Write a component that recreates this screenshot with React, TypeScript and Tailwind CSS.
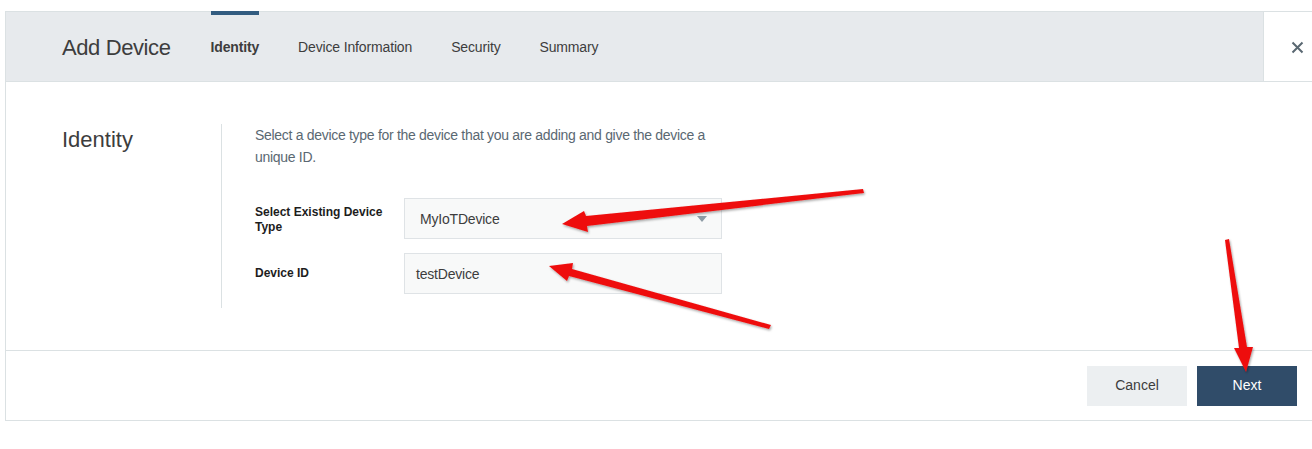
import React from "react";

export default function App() {
  return (
    <div className="relative w-[1312px] h-[449px] bg-white pt-[11px] pl-[5px] font-['Liberation_Sans',Arial,sans-serif] text-[#3d3d3d] overflow-hidden">
      <div className="border border-r-0 border-[#dbe1e3]">
        {/* Header */}
        <div className="flex h-[70px] bg-[#e7eaed] border-b border-[#dbe1e3]">
          <div className="flex flex-1 items-center pl-[56px]">
            <div className="text-[22px] font-light text-[#3d3d3d] tracking-[-0.4px] mr-[40px] pt-[1px]">Add Device</div>
            <div className="flex h-full items-center gap-[39px] text-[14px] tracking-[-0.15px] text-[#3d3d3d] pt-[1px]">
              <div className="relative h-full flex items-center font-bold">
                <div className="absolute top-[-2px] left-0 right-0 h-[4px] bg-[#325c80]"></div>
                Identity
              </div>
              <div className="h-full flex items-center">Device Information</div>
              <div className="h-full flex items-center">Security</div>
              <div className="h-full flex items-center">Summary</div>
            </div>
          </div>
          <div className="w-[49px] bg-white border-l border-[#dbe1e3] flex items-center pl-[27px] pt-[1px]">
            <svg width="13" height="13" viewBox="0 0 13 13">
              <path d="M1.5 1.5 L11.5 11.5 M11.5 1.5 L1.5 11.5" stroke="#5a6872" strokeWidth="2" />
            </svg>
          </div>
        </div>

        {/* Body */}
        <div className="flex h-[268px] pt-[42px]">
          <div className="w-[215px] pl-[56px] pt-[2px]">
            <div className="text-[22px] font-light leading-[28px] text-[#3d3d3d]">Identity</div>
          </div>
          <div className="h-[184px] border-l border-[#dbe1e3] pl-[33px]">
            <p className="w-[470px] text-[14px] leading-[22px] tracking-[-0.3px] text-[#5a6872]">
              Select a device type for the device that you are adding and give the device a unique ID.
            </p>
            <div className="mt-[30px] flex flex-col gap-[14px]">
              <div className="flex items-center">
                <div className="w-[149px] text-[12px] font-bold leading-[15px] text-[#1d1d1d] pt-[2px]">
                  Select Existing Device<br />Type
                </div>
                <div className="w-[318px] h-[41px] bg-[#f8f9f9] border border-[#dfe3e6] flex items-center justify-between pl-[15px] pr-[14px] text-[14px] tracking-[-0.2px] text-[#3d3d3d]">
                  <span className="pt-[1px]">MyIoTDevice</span>
                  <svg width="10" height="6" viewBox="0 0 10 6">
                    <path d="M0 0 L10 0 L5 6 Z" fill="#8c9ba5" />
                  </svg>
                </div>
              </div>
              <div className="flex items-center">
                <div className="w-[149px] text-[12px] font-bold leading-[15px] text-[#1d1d1d]">Device ID</div>
                <div className="w-[318px] h-[41px] bg-[#f8f9f9] border border-[#dfe3e6] flex items-center pl-[11px] text-[14px] tracking-[-0.2px] text-[#3d3d3d]">
                  <span className="pt-[1px]">testDevice</span>
                </div>
              </div>
            </div>
          </div>
        </div>

        {/* Footer */}
        <div className="h-[70px] border-t border-[#dbe1e3] flex items-center justify-end gap-[10px] pr-[15px]">
          <button className="w-[100px] h-[40px] bg-[#eceff1] text-[14px] text-[#3d3d3d]">Cancel</button>
          <button className="w-[100px] h-[40px] bg-[#304c69] text-[14px] text-white">Next</button>
        </div>
      </div>

      {/* Red annotation arrows */}
      <svg className="absolute left-0 top-0 pointer-events-none" width="1312" height="449">
        <defs>
          <filter id="sh" x="-20%" y="-20%" width="140%" height="140%">
            <feDropShadow dx="1" dy="1.5" stdDeviation="1.2" floodColor="#000" floodOpacity="0.35" />
          </filter>
        </defs>
        <g fill="#ee1111" filter="url(#sh)">
          <polygon points="863,189 586,216 584,211 562,224 588,232 587,226 864,193" />
          <polygon points="771,325 572,269 573,263 549,266 567,281 569,276 769,329" />
          <polygon points="1225,240 1239,348 1234,348 1246,372 1253,347 1247,347 1229,239" />
        </g>
      </svg>
    </div>
  );
}
